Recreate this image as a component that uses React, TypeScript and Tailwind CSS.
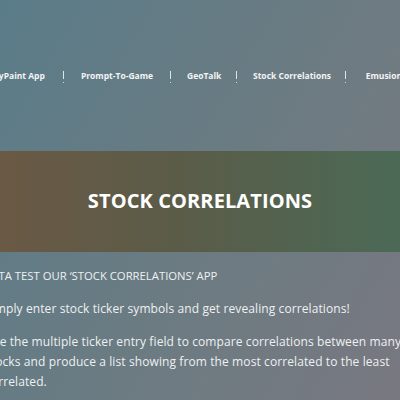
const navItems = [
  { label: 'FancyPaint App', w: 'w-[70px]' },
  { label: 'Prompt-To-Game', w: 'w-[74px]' },
  { label: 'GeoTalk', w: 'w-[33px]' },
  { label: 'Stock Correlations', w: 'w-[76px]' },
  { label: 'Emusions', w: 'w-[48px]' },
]

function Divider() {
  return (
    <span className="flex flex-col items-center gap-[3px] mt-[2px]">
      <span className="block w-px h-[8px] bg-white/80" />
      <span className="block w-px h-px bg-white/70" />
    </span>
  )
}

export default function App() {
  return (
    <div
      className="w-[400px] h-[400px] overflow-hidden bg-[linear-gradient(120deg,#5a7c89_0%,#6c7b82_55%,#787880_100%)] text-white"
      style={{ fontFamily: '"Open Sans", "Noto Sans", sans-serif' }}
    >
      {/* top nav */}
      <nav className="h-[151px] pt-[69px]">
        <div className="flex items-center gap-4 ml-[-23px] whitespace-nowrap">
          {navItems.map((item, i) => (
            <div key={item.label} className="flex items-center gap-4">
              <span className={`${item.w} text-center text-[8.5px] font-bold text-[#f4f4f4]`}>{item.label}</span>
              {i < navItems.length - 1 && <Divider />}
            </div>
          ))}
        </div>
      </nav>

      {/* banner */}
      <section className="h-[101px] flex items-center justify-center bg-[linear-gradient(90deg,#6a5945_0%,#5a5c48_45%,#4b6a56_100%)]">
        <h1 className="text-[20px] font-bold tracking-[0.1px] mt-[-2px]">STOCK CORRELATIONS</h1>
      </section>

      {/* intro text */}
      <div className="ml-[-15px] mr-[-12px] pt-[16px] text-[#eef0f1]">
        <p className="text-[11.3px] leading-[16px] uppercase">Beta test our ‘Stock Correlations’ app</p>
        <p className="mt-[15px] text-[12px] leading-[20px] tracking-[0.1px]">
          Simply enter stock ticker symbols and get revealing correlations!
        </p>
        <p className="mt-[13px] text-[12px] leading-[20px] tracking-[0.1px]">
          Use the multiple ticker entry field to compare correlations between many stocks and produce a list showing from the most correlated to the least correlated.
        </p>
      </div>
    </div>
  )
}
